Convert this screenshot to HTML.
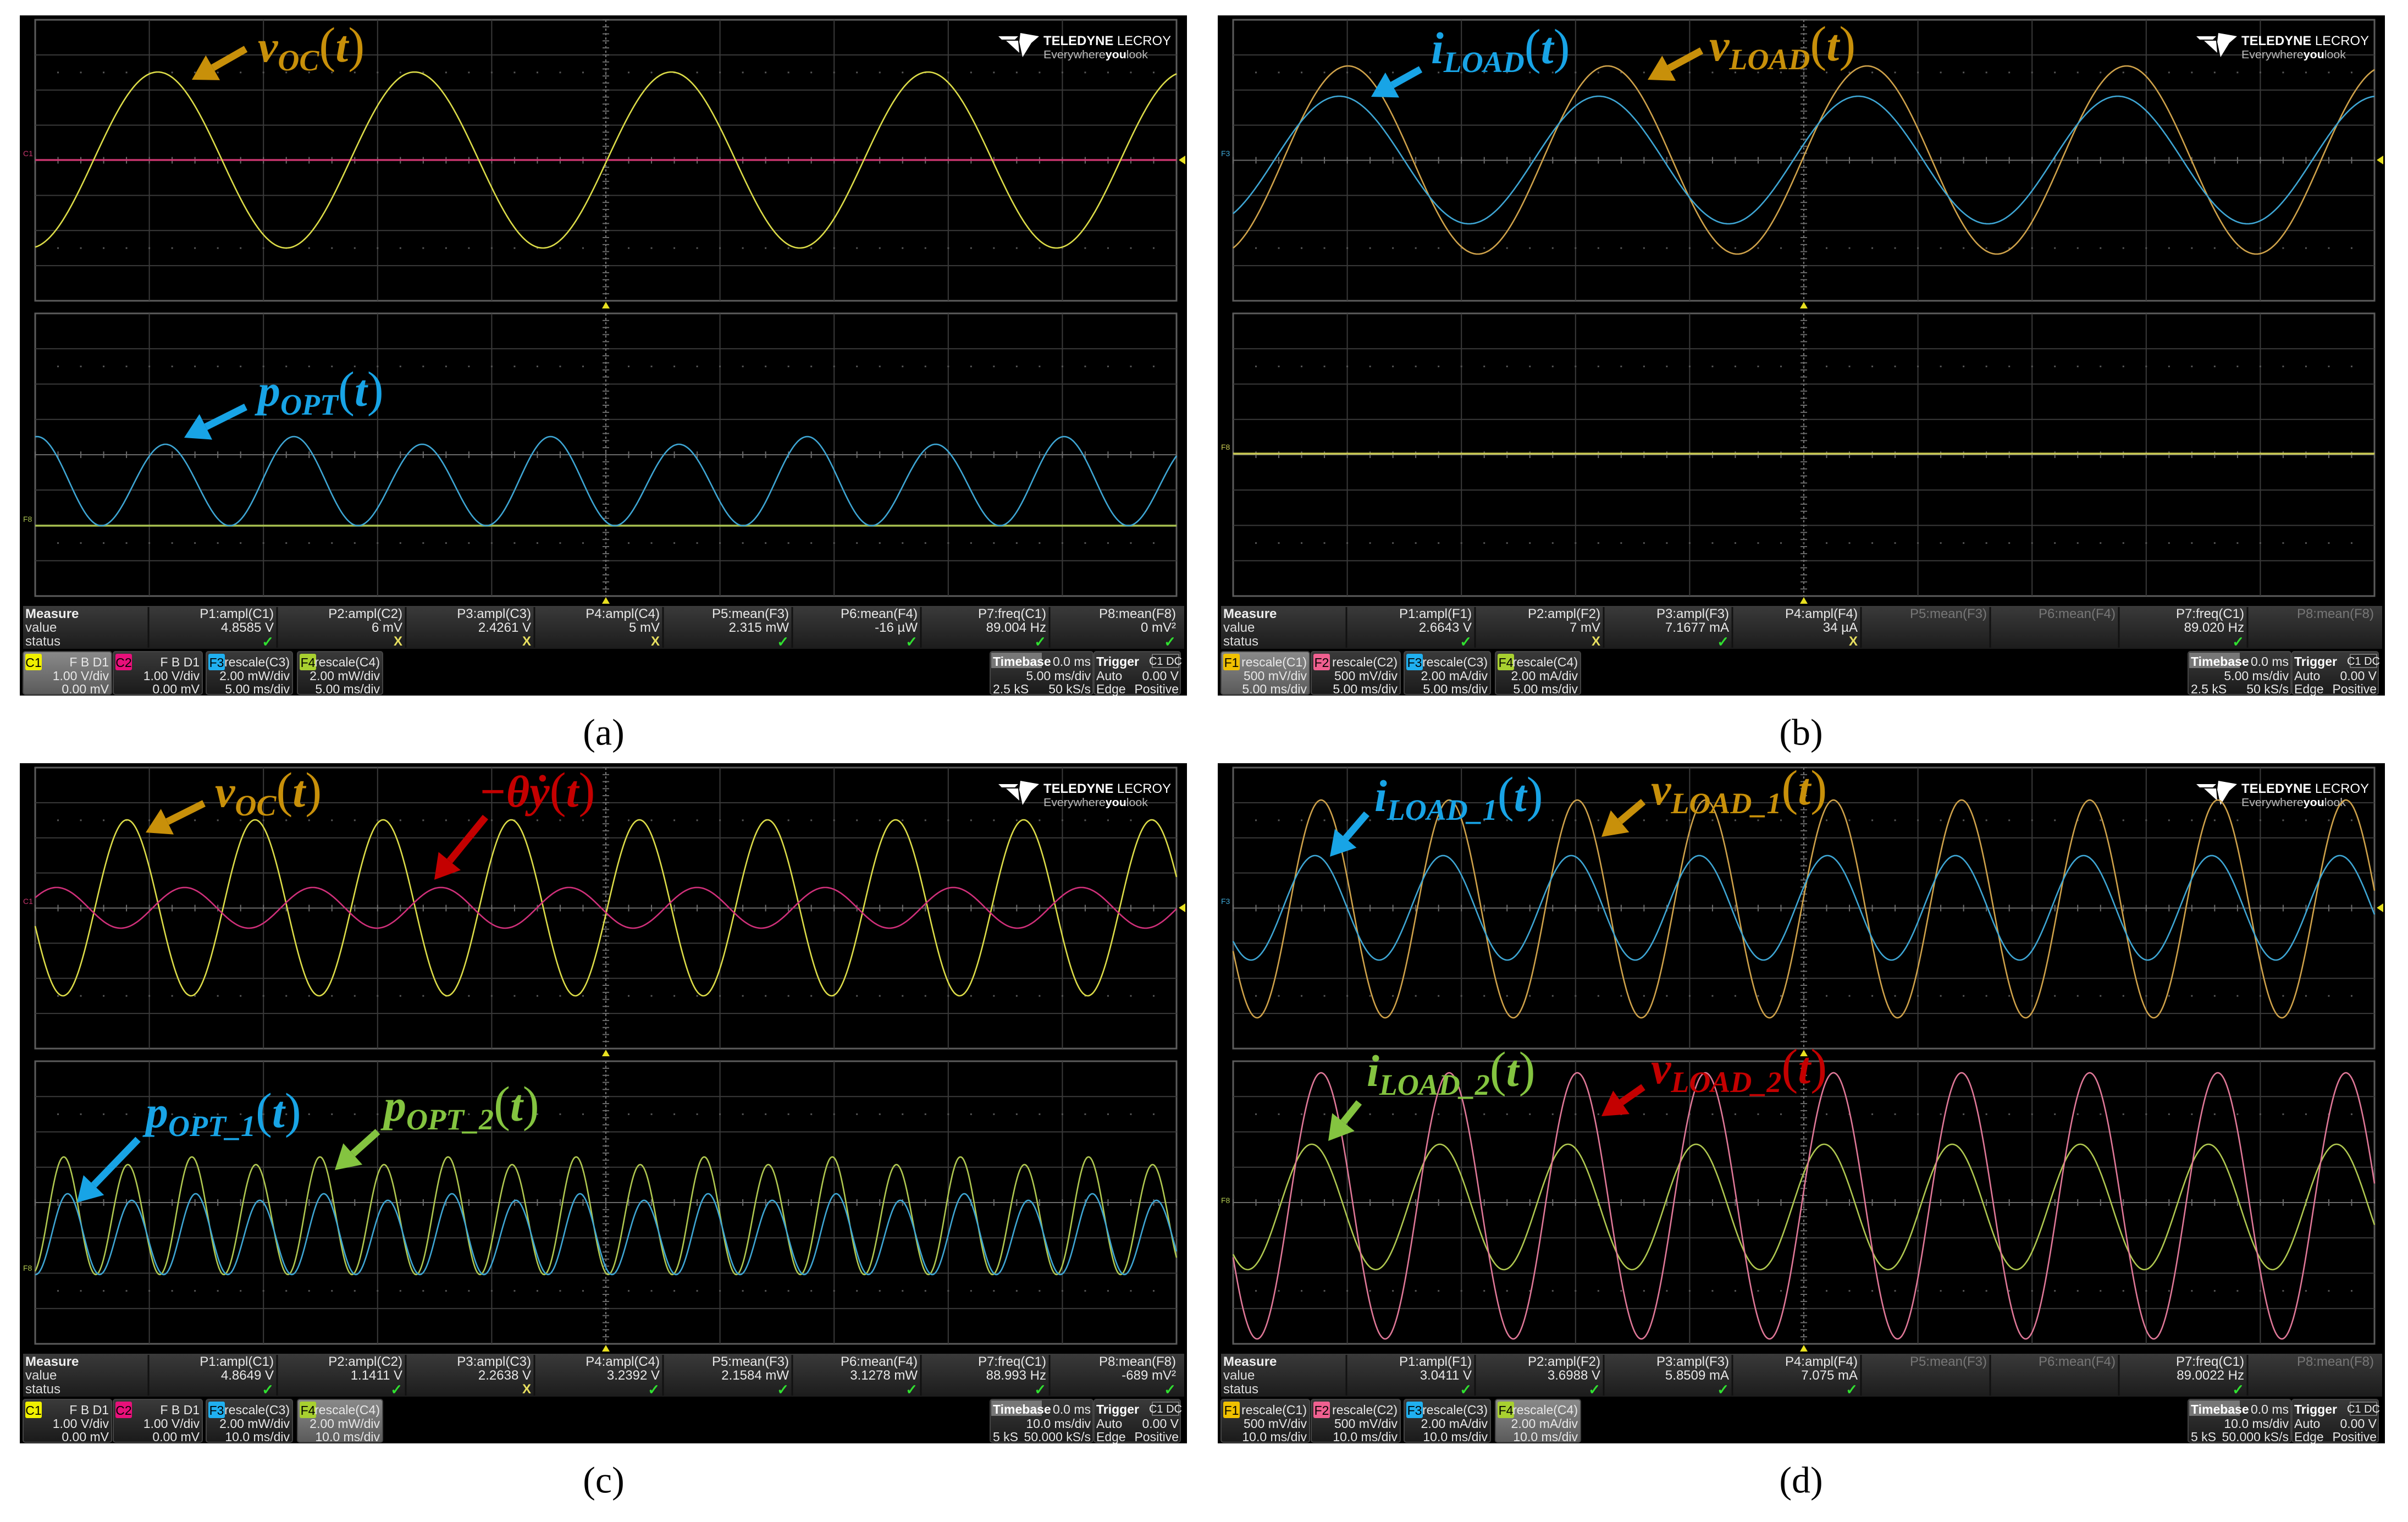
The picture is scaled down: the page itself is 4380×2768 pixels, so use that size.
<!DOCTYPE html>
<html><head><meta charset="utf-8">
<style>
html,body{margin:0;padding:0;background:#fff;}
#root{position:relative;width:4380px;height:2768px;overflow:hidden;background:#fff;}
.cap{position:absolute;font-family:"Liberation Serif",serif;font-size:68px;color:#000;transform:translate(-50%,-50%);}
svg{position:absolute;left:0;top:0;}
</style></head>
<body><div id="root">
<div class="cap" style="left:1098px;top:1332px">(a)</div>
<div class="cap" style="left:3276px;top:1332px">(b)</div>
<div class="cap" style="left:1098px;top:2692px">(c)</div>
<div class="cap" style="left:3276px;top:2692px">(d)</div>
</div>
<script>
const NS='http://www.w3.org/2000/svg';
const root=document.getElementById('root');
const W=2123,H=1237,X0=28,X1=2104;
const TP=Math.PI*2;
function wave(fn){let d='';for(let x=X0;x<=X1;x+=2){d+=(x==X0?'M':'L')+x+' '+fn(x).toFixed(1)+' ';}return d;}
function grid(y0,y1){
  let s=`<rect x="${X0}" y="${y0}" width="${X1-X0}" height="${y1-y0}" fill="#000" stroke="#5c5c5c" stroke-width="3"/>`;
  const dx=(X1-X0)/10,dy=(y1-y0)/8;
  for(let i=1;i<10;i++){const x=X0+i*dx; if(i==5)continue; s+=`<line x1="${x}" y1="${y0}" x2="${x}" y2="${y1}" stroke="#3a3a3a" stroke-width="2"/>`;}
  for(let j=1;j<8;j++){const y=y0+j*dy; if(j==4)continue; s+=`<line x1="${X0}" y1="${y}" x2="${X1}" y2="${y}" stroke="#3a3a3a" stroke-width="2"/>`;}
  const cx=X0+5*dx,cy=y0+4*dy;
  s+=`<line x1="${cx}" y1="${y0}" x2="${cx}" y2="${y1}" stroke="#7a7a7a" stroke-width="2" stroke-dasharray="4 4"/>`;
  s+=`<line x1="${X0}" y1="${cy}" x2="${X1}" y2="${cy}" stroke="#6a6a6a" stroke-width="2"/>`;
  for(let i=0;i<=50;i++){const x=X0+i*dx/5;s+=`<line x1="${x}" y1="${cy-6}" x2="${x}" y2="${cy+6}" stroke="#6a6a6a" stroke-width="2"/>`;}
  for(let j=0;j<=40;j++){const y=y0+j*dy/5;s+=`<line x1="${cx-6}" y1="${y}" x2="${cx+6}" y2="${y}" stroke="#6a6a6a" stroke-width="2"/>`;}
  for(const jj of [1.5,6.5]){const y=y0+jj*dy;for(let i=1;i<50;i++){const x=X0+i*dx/5;s+=`<rect x="${x-1.5}" y="${y-1.5}" width="3" height="3" fill="#555"/>`;}}
  s+=`<polygon points="${cx-7},${y1+14} ${cx+7},${y1+14} ${cx},${y1+2}" fill="#e8e020"/>`;
  return s;
}
function logo(){
  const x=1780,y=28;
  return `<g><polygon points="${x},${y+10} ${x+36},${y+10} ${x+30},${y+16} ${x+6},${y+16}" fill="#fff"/>
  <polygon points="${x+40},${y+4} ${x+74},${y+10} ${x+60},${y+22} ${x+44},${y+48} ${x+38},${y+20}" fill="#fff"/>
  <polygon points="${x+14},${y+18} ${x+36},${y+18} ${x+38},${y+40}" fill="#fff"/>
  <text x="${x+82}" y="${y+26}" textLength="232" lengthAdjust="spacingAndGlyphs" font-family="Liberation Sans,sans-serif" font-size="24" font-weight="bold" fill="#fff">TELEDYNE <tspan font-weight="normal">LECROY</tspan></text>
  <text x="${x+82}" y="${y+50}" textLength="190" lengthAdjust="spacingAndGlyphs" font-family="Liberation Sans,sans-serif" font-size="20" fill="#bbb">Everywhere<tspan font-weight="bold" fill="#fff">you</tspan>look</text></g>`;
}
const F='font-family="Liberation Sans Narrow,Liberation Sans,sans-serif"';
function measure(m){
  const b=[234,468,702,936,1170,1405,1639,1873,2109];
  let s=`<defs><linearGradient id="mg" x1="0" y1="0" x2="0" y2="1"><stop offset="0" stop-color="#3a3a3a"/><stop offset="1" stop-color="#1c1c1c"/></linearGradient>
  <linearGradient id="cg" x1="0" y1="0" x2="0" y2="1"><stop offset="0" stop-color="#3a3a3a"/><stop offset="1" stop-color="#1a1a1a"/></linearGradient>
  <linearGradient id="sg" x1="0" y1="0" x2="0" y2="1"><stop offset="0" stop-color="#8a8a8a"/><stop offset="1" stop-color="#5a5a5a"/></linearGradient></defs>`;
  s+=`<rect x="6" y="1074" width="2112" height="78" fill="url(#mg)"/>`;
  for(const x of b.slice(0,8)) s+=`<line x1="${x}" y1="1076" x2="${x}" y2="1150" stroke="#111" stroke-width="3"/>`;
  s+=`<text x="10" y="1096" ${F} font-size="24" font-weight="bold" fill="#eee">Measure</text><text x="10" y="1121" ${F} font-size="24" fill="#ddd">value</text><text x="10" y="1146" ${F} font-size="24" fill="#ddd">status</text>`;
  for(let i=0;i<8;i++){
    const xr=b[i+1]-6, dim=m.dim&&m.dim.includes(i);
    s+=`<text x="${xr}" y="1096" ${F} font-size="24" fill="${dim?'#777':'#e8e8e8'}" text-anchor="end">${m.h[i]}</text>`;
    s+=`<text x="${xr}" y="1121" ${F} font-size="24" fill="#e8e8e8" text-anchor="end">${m.v[i]}</text>`;
    const st=m.s[i];
    if(st=='v') s+=`<text x="${xr}" y="1148" ${F} font-size="26" font-weight="bold" fill="#30e030" text-anchor="end">✓</text>`;
    else if(st=='x') s+=`<text x="${xr}" y="1146" ${F} font-size="24" font-weight="bold" fill="#e8e060" text-anchor="end">X</text>`;
  }
  return s;
}
function chbar(c){
  let s='';
  const boxes=[[6,167],[170,332],[339,496],[505,660]];
  const cols=[c.c1,c.c2,'#20b0f0','#a8d030'];
  for(let i=0;i<4;i++){
    const [l,r]=boxes[i],sel=c.sel==i,d=c.b[i];
    s+=`<rect x="${l}" y="1157" width="${r-l}" height="78" rx="4" fill="${sel?'url(#sg)':'url(#cg)'}" stroke="#444" stroke-width="2"/>`;
    s+=`<rect x="${l+4}" y="1161" width="30" height="30" rx="3" fill="${cols[i]}"/>`;
    s+=`<text x="${l+19}" y="1185" ${F} font-size="23" fill="#000" text-anchor="middle">${c.lab[i]}</text>`;
    s+=`<text x="${r-5}" y="1184" ${F} font-size="23" fill="#e8e8e8" text-anchor="end">${d[0]}</text>`;
    s+=`<text x="${r-5}" y="1209" ${F} font-size="23" fill="#e8e8e8" text-anchor="end">${d[1]}</text>`;
    s+=`<text x="${r-5}" y="1233" ${F} font-size="23" fill="#e8e8e8" text-anchor="end">${d[2]}</text>`;
  }
  s+=`<rect x="1765" y="1157" width="187" height="78" rx="4" fill="url(#cg)" stroke="#444" stroke-width="2"/>`;
  s+=`<rect x="1767" y="1159" width="92" height="28" fill="#777"/>`;
  s+=`<text x="1770" y="1183" ${F} font-size="23" font-weight="bold" fill="#fff">Timebase</text><text x="1948" y="1183" ${F} font-size="23" fill="#e8e8e8" text-anchor="end">0.0 ms</text>`;
  s+=`<text x="1948" y="1209" ${F} font-size="23" fill="#e8e8e8" text-anchor="end">${c.tb}</text>`;
  s+=`<text x="1770" y="1233" ${F} font-size="23" fill="#e8e8e8">${c.ks}</text><text x="1948" y="1233" ${F} font-size="23" fill="#e8e8e8" text-anchor="end">${c.rate}</text>`;
  s+=`<rect x="1954" y="1157" width="157" height="78" rx="4" fill="url(#cg)" stroke="#444" stroke-width="2"/>`;
  s+=`<text x="1958" y="1183" ${F} font-size="23" font-weight="bold" fill="#fff">Trigger</text>`;
  s+=`<rect x="2060" y="1162" width="48" height="24" fill="#222" stroke="#888" stroke-width="1.5"/><text x="2084" y="1181" ${F} font-size="20" fill="#eee" text-anchor="middle">C1 DC</text>`;
  s+=`<text x="1958" y="1209" ${F} font-size="23" fill="#e8e8e8">Auto</text><text x="2108" y="1209" ${F} font-size="23" fill="#e8e8e8" text-anchor="end">0.00 V</text>`;
  s+=`<text x="1958" y="1233" ${F} font-size="23" fill="#e8e8e8">Edge</text><text x="2108" y="1233" ${F} font-size="23" fill="#e8e8e8" text-anchor="end">Positive</text>`;
  return s;
}
function panel(px,py,waves,m,c,labs){
  let s=`<svg xmlns="${NS}" width="${W}" height="${H}" viewBox="0 0 ${W} ${H}" style="left:${px}px;top:${py}px">`;
  s+=`<rect width="${W}" height="${H}" fill="#000"/>`;
  s+=grid(8,519)+grid(542,1056);
  s+=logo();
  for(const w of waves){
    if(w.line!==undefined) s+=`<line x1="${X0}" y1="${w.line}" x2="${X1}" y2="${w.line}" stroke="${w.c}" stroke-width="3.5"/>`;
    else s+=`<path d="${wave(w.f)}" fill="none" stroke="${w.c}" stroke-width="2.6"/>`;
  }
  for(const l of labs) s+=`<text x="6" y="${l[1]}" ${F} font-size="14" fill="${l[2]}">${l[0]}</text>`;
  s+=`<polygon points="${X1+16},${263-8} ${X1+16},${263+8} ${X1+4},263" fill="#e8e020"/>`;
  s+=measure(m)+chbar(c);
  s+='</svg>';
  root.insertAdjacentHTML('beforeend',s);
}
const cos=Math.cos;
const Y='#dcdc48',GOLD='#cfa24a',BL='#3ea6d4',GR='#b0c850';
const hA=['P1:ampl(C1)','P2:ampl(C2)','P3:ampl(C3)','P4:ampl(C4)','P5:mean(F3)','P6:mean(F4)','P7:freq(C1)','P8:mean(F8)'];
const hB=['P1:ampl(F1)','P2:ampl(F2)','P3:ampl(F3)','P4:ampl(F4)','P5:mean(F3)','P6:mean(F4)','P7:freq(C1)','P8:mean(F8)'];
// (a)
panel(36,28,[
 {line:263,c:'#c8366e'},
 {f:x=>263-160*cos(TP*(x-251)/467),c:Y},
 {line:928,c:'#a8c050'},
 {f:x=>{const h=155-7*cos(TP*(x-265)/467);return 928-h*(1+cos(TP*(x-265)/233.5))/2;},c:BL}
],{h:hA,v:['4.8585 V','6 mV','2.4261 V','5 mV','2.315 mW','-16 µW','89.004 Hz','0 mV²'],s:['v','x','x','x','v','v','v','v']},
{c1:'#f0f000',c2:'#e8107a',lab:['C1','C2','F3','F4'],sel:0,b:[['F B D1','1.00 V/div','0.00 mV'],['F B D1','1.00 V/div','0.00 mV'],['rescale(C3)','2.00 mW/div','5.00 ms/div'],['rescale(C4)','2.00 mW/div','5.00 ms/div']],tb:'5.00 ms/div',ks:'2.5 kS',rate:'50 kS/s'},
[['C1',256,'#c8366e'],['F8',921,'#a8c050']]);
// (b)
panel(2215,28,[
 {f:x=>263-171*cos(TP*(x-237)/472),c:GOLD},
 {f:x=>263-116*cos(TP*(x-221)/472),c:BL},
 {line:797,c:'#c8c850'}
],{h:hB,v:['2.6643 V','7 mV','7.1677 mA','34 µA','','','89.020 Hz',''],s:['v','x','v','x','','','v',''],dim:[4,5,7]},
{c1:'#f0c000',c2:'#f06090',lab:['F1','F2','F3','F4'],sel:0,b:[['rescale(C1)','500 mV/div','5.00 ms/div'],['rescale(C2)','500 mV/div','5.00 ms/div'],['rescale(C3)','2.00 mA/div','5.00 ms/div'],['rescale(C4)','2.00 mA/div','5.00 ms/div']],tb:'5.00 ms/div',ks:'2.5 kS',rate:'50 kS/s'},
[['F3',256,BL],['F8',790,'#c8c850']]);
// (c)
panel(36,1388,[
 {f:x=>263-160*cos(TP*(x-195)/233),c:Y},
 {f:x=>263-37*cos(TP*(x-300)/233),c:'#d0307a'},
 {f:x=>{const h=207+7*cos(TP*(x-80)/233);return 930-h*(1+cos(TP*(x-80)/116.5))/2;},c:GR},
 {f:x=>{const h=141+6*cos(TP*(x-87)/233);return 930-h*(1+cos(TP*(x-87)/116.5))/2;},c:BL}
],{h:hA,v:['4.8649 V','1.1411 V','2.2638 V','3.2392 V','2.1584 mW','3.1278 mW','88.993 Hz','-689 mV²'],s:['v','v','x','v','v','v','v','v']},
{c1:'#f0f000',c2:'#e8107a',lab:['C1','C2','F3','F4'],sel:3,b:[['F B D1','1.00 V/div','0.00 mV'],['F B D1','1.00 V/div','0.00 mV'],['rescale(C3)','2.00 mW/div','10.0 ms/div'],['rescale(C4)','2.00 mW/div','10.0 ms/div']],tb:'10.0 ms/div',ks:'5 kS',rate:'50.000 kS/s'},
[['C1',256,'#c8366e'],['F8',923,GR]]);
// (d)
panel(2215,1388,[
 {f:x=>265-198*cos(TP*(x-188)/233),c:GOLD},
 {f:x=>263-95*cos(TP*(x-177)/233),c:BL},
 {f:x=>807-114*cos(TP*(x-171)/233),c:GR},
 {f:x=>805-242*cos(TP*(x-188)/233),c:'#e07898'}
],{h:hB,v:['3.0411 V','3.6988 V','5.8509 mA','7.075 mA','','','89.0022 Hz',''],s:['v','v','v','v','','','v',''],dim:[4,5,7]},
{c1:'#f0c000',c2:'#f06090',lab:['F1','F2','F3','F4'],sel:3,b:[['rescale(C1)','500 mV/div','10.0 ms/div'],['rescale(C2)','500 mV/div','10.0 ms/div'],['rescale(C3)','2.00 mA/div','10.0 ms/div'],['rescale(C4)','2.00 mA/div','10.0 ms/div']],tb:'10.0 ms/div',ks:'5 kS',rate:'50.000 kS/s'},
[['F3',256,BL],['F8',800,GR]]);

// annotations
function arrow(x1,y1,x2,y2,c){
  const a=Math.atan2(y2-y1,x2-x1),L=44,Wd=26;
  const bx=x2-L*cos(a),by=y2-L*Math.sin(a);
  const nx=-Math.sin(a),ny=cos(a);
  return `<line x1="${x1}" y1="${y1}" x2="${bx}" y2="${by}" stroke="${c}" stroke-width="13"/>
  <polygon points="${x2},${y2} ${bx+nx*Wd},${by+ny*Wd} ${bx-nx*Wd},${by-ny*Wd}" fill="${c}"/>`;
}
function ann(x,y,main,sub,c){
  return `<text x="${x}" y="${y}" font-family="Liberation Serif,serif" font-style="italic" font-weight="bold" font-size="82" fill="${c}">${main}<tspan font-size="54" dy="16">${sub}</tspan><tspan font-style="normal" font-weight="normal" font-size="90" dy="-16">(</tspan>t<tspan font-style="normal" font-weight="normal" font-size="90">)</tspan></text>`;
}
const O='#c8900a',B='#18a4e6',R='#c40000',G='#84c440';
let a=`<svg xmlns="${NS}" width="4380" height="2768" viewBox="0 0 4380 2768">`;
a+=ann(469,112,'v','OC',O)+arrow(447,89,349,145,O);
a+=ann(469,738,'p','OPT',B)+arrow(447,740,335,796,B);
a+=ann(2603,115,'i','LOAD',B)+arrow(2584,126,2494,176,B);
a+=ann(3109,110,'v','LOAD',O)+arrow(3095,92,2997,145,O);
a+=ann(391,1467,'v','OC',O)+arrow(371,1461,265,1514,O);
a+=`<text x="871" y="1467" font-family="Liberation Serif,serif" font-style="italic" font-weight="bold" font-size="82" fill="${R}">−θẏ<tspan font-style="normal" font-weight="normal" font-size="90">(</tspan>t<tspan font-style="normal" font-weight="normal" font-size="90">)</tspan></text>`+arrow(883,1486,790,1600,R);
a+=ann(265,2050,'p','OPT_1',B)+arrow(251,2072,140,2187,B);
a+=ann(698,2038,'p','OPT_2',G)+arrow(687,2058,609,2128,G);
a+=ann(2500,1475,'i','LOAD_1',B)+arrow(2486,1480,2419,1558,B);
a+=ann(3003,1463,'v','LOAD_1',O)+arrow(2989,1458,2913,1522,O);
a+=ann(2486,1975,'i','LOAD_2',G)+arrow(2472,2005,2416,2075,G);
a+=ann(3003,1970,'v','LOAD_2',R)+arrow(2989,1977,2913,2030,R);
a+='</svg>';
root.insertAdjacentHTML('beforeend',a);
</script>
</body></html>
